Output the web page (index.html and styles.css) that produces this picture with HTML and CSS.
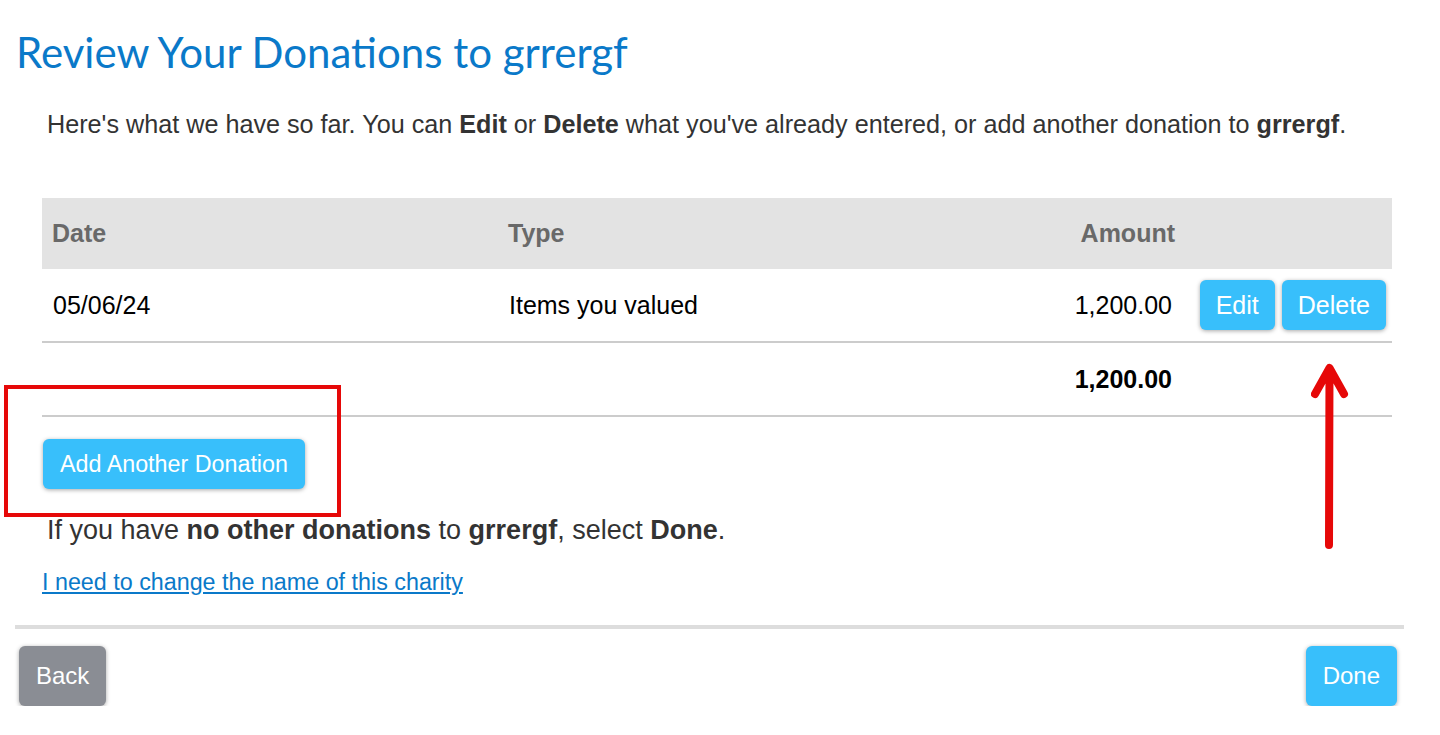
FILE: index.html
```html
<!DOCTYPE html>
<html lang="en">
<head>
  <meta charset="UTF-8">
  <meta name="viewport" content="width=device-width, initial-scale=1.0">
  <title>Review Your Donations</title>
  <link rel="stylesheet" href="styles.css">
</head>
<body>
  <div class="page">
    <h1 class="title">Review Your Donations to grrergf</h1>

    <p class="intro">Here's what we have so far. You can <b>Edit</b> or <b>Delete</b> what you've already entered, or add another donation to <b>grrergf</b>.</p>

    <table class="donations">
      <thead>
        <tr>
          <th class="col-date">Date</th>
          <th class="col-type">Type</th>
          <th class="col-amount">Amount</th>
          <th class="col-actions"></th>
        </tr>
      </thead>
      <tbody>
        <tr>
          <td>05/06/24</td>
          <td>Items you valued</td>
          <td class="col-amount">1,200.00</td>
          <td class="col-actions">
            <button class="btn btn-blue btn-small">Edit</button>
            <button class="btn btn-blue btn-small">Delete</button>
          </td>
        </tr>
        <tr class="total">
          <td></td>
          <td></td>
          <td class="col-amount">1,200.00</td>
          <td class="col-actions arrow-cell">
            <svg class="arrow" width="40" height="186" viewBox="0 0 40 186">
              <path d="M18 182 L18.5 6 M4 31 L18.5 5 L33 31" fill="none" stroke="#e60808" stroke-width="8" stroke-linecap="round" stroke-linejoin="round"/>
            </svg>
          </td>
        </tr>
      </tbody>
    </table>

    <div class="add-row">
      <button class="btn btn-blue btn-add">Add Another Donation</button>
      <div class="highlight"></div>
    </div>

    <p class="done-note">If you have <b>no other donations</b> to <b>grrergf</b>, select <b>Done</b>.</p>

    <a class="change-link" href="#">I need to change the name of this charity</a>

    <div class="footer">
      <button class="btn btn-gray btn-nav">Back</button>
      <button class="btn btn-blue btn-nav">Done</button>
    </div>
  </div>
</body>
</html>
```

FILE: styles.css
```css
body {
  margin: 0;
  font-family: "Liberation Sans", Arial, sans-serif;
  color: #333;
  background: #fff;
}
.page {
  padding: 28px 36px 0 15px;
}
.title {
  font-family: Lato, "Open Sans", sans-serif;
  font-weight: 400;
  font-size: 42px;
  color: #0a79c9;
  margin: 0 0 0 1px;
  line-height: 48px;
}
.intro {
  font-size: 25.2px;
  margin: 33px 0 0 32px;
  line-height: 30px;
}
.donations {
  width: 1350px;
  margin: 59px 0 0 27px;
  border-collapse: collapse;
  font-size: 25px;
  color: #000;
}
.donations th {
  background: #e3e3e3;
  color: #696969;
  text-align: left;
  height: 71px;
  padding: 0 10px;
}
.donations td {
  height: 72px;
  padding: 0 10px 0 11px;
  border-bottom: 2px solid #ccc;
}
.col-date { width: 436px; }
.col-type { width: 540px; }
.donations .col-amount {
  text-align: right;
  padding-right: 13px;
}
.donations th.col-amount {
  padding-right: 10px;
}
.donations .col-actions {
  width: 190px;
  text-align: right;
  padding-right: 6px;
  white-space: nowrap;
}
.total .col-amount {
  font-weight: bold;
}
.arrow-cell {
  position: relative;
}
.arrow {
  position: absolute;
  left: 126px;
  top: 20px;
}
.btn {
  font-family: "Liberation Sans", Arial, sans-serif;
  font-size: 23px;
  color: #fff;
  border: none;
  border-radius: 6px;
  box-shadow: 0 1px 4px rgba(0,0,0,0.35);
  cursor: pointer;
}
.btn-blue { background: #38bffb; }
.btn-gray { background: #8a8d94; }
.btn-small {
  font-size: 25px;
  height: 50px;
  padding: 0 16px;
}
.add-row {
  position: relative;
  margin: 22px 0 0 28px;
}
.btn-add {
  font-size: 23.3px;
  height: 50px;
  padding: 0 17px;
}
.highlight {
  position: absolute;
  left: -39px;
  top: -54px;
  width: 329px;
  height: 124px;
  border: 4px solid #e60808;
}
.done-note {
  font-size: 27px;
  margin: 26px 0 0 32px;
  line-height: 30px;
}
.change-link {
  display: inline-block;
  font-size: 23.3px;
  color: #0a79c9;
  margin: 23px 0 0 27px;
  line-height: 28px;
}
.footer {
  display: flex;
  justify-content: space-between;
  border-top: 4px solid #ddd;
  margin-top: 29px;
  padding: 17px 7px 0 4px;
}
.btn-nav {
  font-size: 24px;
  height: 60px;
  padding: 0 17px;
}
```
